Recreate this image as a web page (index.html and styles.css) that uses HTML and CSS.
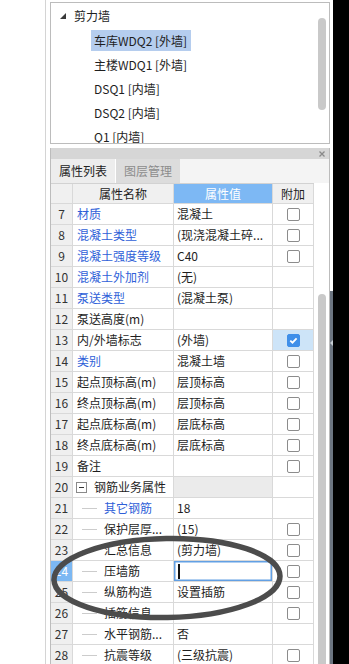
FILE: index.html
```html
<!DOCTYPE html>
<html lang="zh-CN">
<head>
  <meta charset="UTF-8">
  <meta name="viewport" content="width=device-width, initial-scale=1.0">
  <title>属性列表</title>
  <link rel="stylesheet" href="styles.css">
</head>
<body>
  <div class="gutter"></div>

  <div class="main">
    <!-- Component tree -->
    <div class="tree-panel">
      <div class="tree-list">
        <div class="tree-item root">
          <svg class="arrow" width="6" height="6" viewBox="0 0 6 6"><polygon points="6,0 6,6 0,6" fill="#3a3a3a"/></svg>
          剪力墙
        </div>
        <div class="tree-item child"><span class="label selected">车库WDQ2 [外墙]</span></div>
        <div class="tree-item child"><span class="label">主楼WDQ1 [外墙]</span></div>
        <div class="tree-item child"><span class="label">DSQ1 [内墙]</span></div>
        <div class="tree-item child"><span class="label">DSQ2 [内墙]</span></div>
        <div class="tree-item child"><span class="label">Q1 [内墙]</span></div>
      </div>
      <div class="scroll tree-scroll"><div class="thumb"></div></div>
    </div>

    <!-- Property grid -->
    <div class="prop-panel">
      <div class="title-bar">
        <svg width="6" height="6" viewBox="0 0 6 6"><path d="M0.5 0.5 L5.5 5.5 M5.5 0.5 L0.5 5.5" stroke="#8a8a8a" stroke-width="1.3"/></svg>
      </div>
      <div class="tabs">
        <div class="tab active">属性列表</div>
        <div class="tab">图层管理</div>
      </div>
      <div class="grid-wrap">
        <div class="grid">
          <div class="row head">
            <div class="c-num"></div>
            <div class="c-name">属性名称</div>
            <div class="c-val">属性值</div>
            <div class="c-add">附加</div>
          </div>
          <div class="row"><div class="c-num">7</div><div class="c-name link">材质</div><div class="c-val">混凝土</div><div class="c-add"><span class="cb"></span></div></div>
          <div class="row"><div class="c-num">8</div><div class="c-name link">混凝土类型</div><div class="c-val">(现浇混凝土碎...</div><div class="c-add"><span class="cb"></span></div></div>
          <div class="row"><div class="c-num">9</div><div class="c-name link">混凝土强度等级</div><div class="c-val">C40</div><div class="c-add"><span class="cb"></span></div></div>
          <div class="row"><div class="c-num">10</div><div class="c-name link">混凝土外加剂</div><div class="c-val">(无)</div><div class="c-add"></div></div>
          <div class="row"><div class="c-num">11</div><div class="c-name link">泵送类型</div><div class="c-val">(混凝土泵)</div><div class="c-add"></div></div>
          <div class="row"><div class="c-num">12</div><div class="c-name">泵送高度(m)</div><div class="c-val"></div><div class="c-add"></div></div>
          <div class="row"><div class="c-num">13</div><div class="c-name">内/外墙标志</div><div class="c-val">(外墙)</div>
            <div class="c-add on"><span class="cb checked"><svg width="13" height="13" viewBox="0 0 13 13"><path d="M3.3 6.6 L5.5 8.7 L9.6 4.4" fill="none" stroke="#fff" stroke-width="1.8"/></svg></span></div></div>
          <div class="row"><div class="c-num">14</div><div class="c-name link">类别</div><div class="c-val">混凝土墙</div><div class="c-add"><span class="cb"></span></div></div>
          <div class="row"><div class="c-num">15</div><div class="c-name">起点顶标高(m)</div><div class="c-val">层顶标高</div><div class="c-add"><span class="cb"></span></div></div>
          <div class="row"><div class="c-num">16</div><div class="c-name">终点顶标高(m)</div><div class="c-val">层顶标高</div><div class="c-add"><span class="cb"></span></div></div>
          <div class="row"><div class="c-num">17</div><div class="c-name">起点底标高(m)</div><div class="c-val">层底标高</div><div class="c-add"><span class="cb"></span></div></div>
          <div class="row"><div class="c-num">18</div><div class="c-name">终点底标高(m)</div><div class="c-val">层底标高</div><div class="c-add"><span class="cb"></span></div></div>
          <div class="row"><div class="c-num">19</div><div class="c-name">备注</div><div class="c-val"></div><div class="c-add"><span class="cb"></span></div></div>
          <div class="row"><div class="c-num">20</div><div class="c-name group"><span class="toggle"></span>钢筋业务属性</div><div class="c-val shaded"></div><div class="c-add"></div></div>
          <div class="row"><div class="c-num">21</div><div class="c-name sub link"><span class="branch"></span>其它钢筋</div><div class="c-val">18</div><div class="c-add"></div></div>
          <div class="row"><div class="c-num">22</div><div class="c-name sub"><span class="branch"></span>保护层厚...</div><div class="c-val">(15)</div><div class="c-add"><span class="cb"></span></div></div>
          <div class="row"><div class="c-num">23</div><div class="c-name sub"><span class="branch"></span>汇总信息</div><div class="c-val">(剪力墙)</div><div class="c-add"><span class="cb"></span></div></div>
          <div class="row"><div class="c-num current">24</div><div class="c-name sub"><span class="branch"></span>压墙筋</div><div class="c-val editing"><span class="caret"></span></div><div class="c-add"><span class="cb"></span></div></div>
          <div class="row"><div class="c-num">25</div><div class="c-name sub"><span class="branch"></span>纵筋构造</div><div class="c-val">设置插筋</div><div class="c-add"><span class="cb"></span></div></div>
          <div class="row"><div class="c-num">26</div><div class="c-name sub"><span class="branch"></span>插筋信息</div><div class="c-val"></div><div class="c-add"><span class="cb"></span></div></div>
          <div class="row"><div class="c-num">27</div><div class="c-name sub"><span class="branch"></span>水平钢筋...</div><div class="c-val">否</div><div class="c-add"></div></div>
          <div class="row"><div class="c-num">28</div><div class="c-name sub"><span class="branch"></span>抗震等级</div><div class="c-val">(三级抗震)</div><div class="c-add"><span class="cb"></span></div></div>
        </div>
        <div class="scroll grid-scroll"><div class="thumb"></div></div>
      </div>
    </div>
  </div>

  <div class="edge"><div class="edge-bar"><span class="notch"></span></div></div>
  <div class="screen-edge"></div>

  <!-- Hand-drawn highlight ring over the grid -->
  <svg class="mark" width="349" height="664" viewBox="0 0 349 664">
    <ellipse cx="167" cy="578" rx="113" ry="39.5" fill="none" stroke="#4c4c4c" stroke-width="5.5" transform="rotate(-1 167 578)"/>
  </svg>
</body>
</html>
```

FILE: styles.css
```css
* {
  box-sizing: border-box;
}
html, body {
  margin: 0;
}
body {
  position: relative;
  display: flex;
  height: 664px;
  overflow: hidden;
  background: #fff;
  font-family: "Noto Sans CJK SC", "Microsoft YaHei", sans-serif;
  font-size: 12px;
  color: #1e1e1e;
}
.gutter {
  width: 46px;
  border-right: 1px solid #d4d4d4;
}
.main {
  width: 284px;
  padding-left: 4px;
  display: flex;
  flex-direction: column;
}

/* tree */
.tree-panel {
  margin-top: 2px;
  height: 142px;
  flex-shrink: 0;
  border: 1px solid #bcbcbc;
  display: flex;
  overflow: hidden;
}
.tree-list {
  flex: 1;
  padding-top: 1px;
  overflow: hidden;
}
.tree-item {
  height: 24px;
  line-height: 24px;
  white-space: nowrap;
}
.root {
  padding-left: 9px;
  display: flex;
  align-items: center;
}
.arrow {
  margin-right: 8px;
  margin-top: -1px;
}
.child {
  padding-left: 40px;
  padding-top: 2px;
  line-height: 21px;
}
.label {
  display: inline-block;
  vertical-align: top;
  height: 21px;
  line-height: 21px;
  padding: 0 4px 0 3px;
}
.selected {
  background: #b5cdee;
}
.scroll {
  width: 11px;
  flex-shrink: 0;
}
.scroll .thumb {
  width: 8px;
  background: #c9c9c9;
  border-radius: 4px;
}
.tree-scroll .thumb {
  margin-top: 15px;
  height: 92px;
}

/* property panel */
.prop-panel {
  margin-top: 4px;
  flex: 1;
  min-height: 0;
  border-left: 1px solid #bcbcbc;
  border-right: 1px solid #bcbcbc;
  display: flex;
  flex-direction: column;
}
.title-bar {
  height: 11px;
  flex-shrink: 0;
  background: #d6d6d6;
  display: flex;
  align-items: center;
  justify-content: flex-end;
  padding-right: 4px;
}
.tabs {
  height: 24px;
  flex-shrink: 0;
  background: #f4f4f4;
  display: flex;
}
.tab {
  padding: 0 8px;
  line-height: 24px;
  background: #dcdcdc;
  color: #8c8c8c;
  border-left: 1px solid #fff;
}
.tab.active {
  background: #ededed;
  color: #222;
  border-left: none;
}
.grid-wrap {
  flex: 1;
  min-height: 0;
  display: flex;
  overflow: hidden;
}
.grid {
  width: 263px;
  flex-shrink: 0;
  border-top: 1px solid #d2d2d2;
}
.grid-scroll {
  flex: 1;
  padding-left: 4px;
}
.grid-scroll .thumb {
  margin-top: 111px;
  height: 400px;
  border-radius: 4px 4px 0 0;
}
.row {
  display: flex;
  height: 21px;
  flex-shrink: 0;
  line-height: 20px;
  border-bottom: 1px solid #d9d9d9;
}
.row.head {
  height: 20px;
  line-height: 19px;
}
.row > div {
  border-right: 1px solid #d9d9d9;
  white-space: nowrap;
  overflow: hidden;
}
.c-num {
  width: 22px;
  background: #efefef;
  text-align: center;
  color: #333;
}
.c-num.current {
  background: #7cb8f3;
  color: #fff;
}
.c-name {
  width: 101px;
  padding-left: 4px;
}
.c-val {
  width: 99px;
  padding-left: 3px;
}
.c-add {
  width: 41px;
  display: flex;
  align-items: center;
  justify-content: center;
}
.head > div {
  background: #f0f0f0;
  text-align: center;
  padding: 0;
}
.head .c-val {
  background: #7db8f4;
  color: #fff;
}
.link {
  color: #2f5fd8;
}
.group {
  display: flex;
  align-items: center;
  padding-left: 3px;
}
.toggle {
  width: 11px;
  height: 11px;
  border: 1px solid #8a8a8a;
  margin-right: 7px;
  position: relative;
  flex-shrink: 0;
}
.toggle::after {
  content: "";
  position: absolute;
  left: 2px;
  top: 4px;
  width: 5px;
  height: 1px;
  background: #333;
}
.sub {
  display: flex;
  align-items: center;
  padding-left: 9px;
}
.branch {
  width: 15px;
  height: 1px;
  background: #cccccc;
  margin-right: 7px;
  flex-shrink: 0;
}
.shaded {
  background: #ebebeb;
}
.editing {
  box-shadow: inset 0 0 0 1.5px #62a0e4;
  display: flex;
  align-items: center;
  padding-left: 4px;
}
.caret {
  width: 1.5px;
  height: 15px;
  background: #111;
}
.cb {
  width: 13px;
  height: 13px;
  border: 1px solid #8c8c8c;
  border-radius: 2px;
  background: #fff;
  margin-top: 1px;
  display: block;
}
.c-add.on {
  background: #cde4f8;
}
.cb.checked {
  border-color: #3f8fe9;
  background: #3f8fe9;
  position: relative;
}
.cb.checked svg {
  position: absolute;
  left: -1px;
  top: -1px;
}

/* window edge */
.edge {
  width: 3px;
  display: flex;
  flex-direction: column;
}
.edge-bar {
  margin-top: 291px;
  flex: 1;
  background: #6c7581;
  position: relative;
}
.notch {
  position: absolute;
  left: 0;
  top: 49px;
  border-top: 3px solid transparent;
  border-bottom: 3px solid transparent;
  border-right: 3px solid #c5ccd3;
}
.screen-edge {
  flex: 1;
  background: #000;
}
.mark {
  position: absolute;
  left: 0;
  top: 0;
  pointer-events: none;
}
```
